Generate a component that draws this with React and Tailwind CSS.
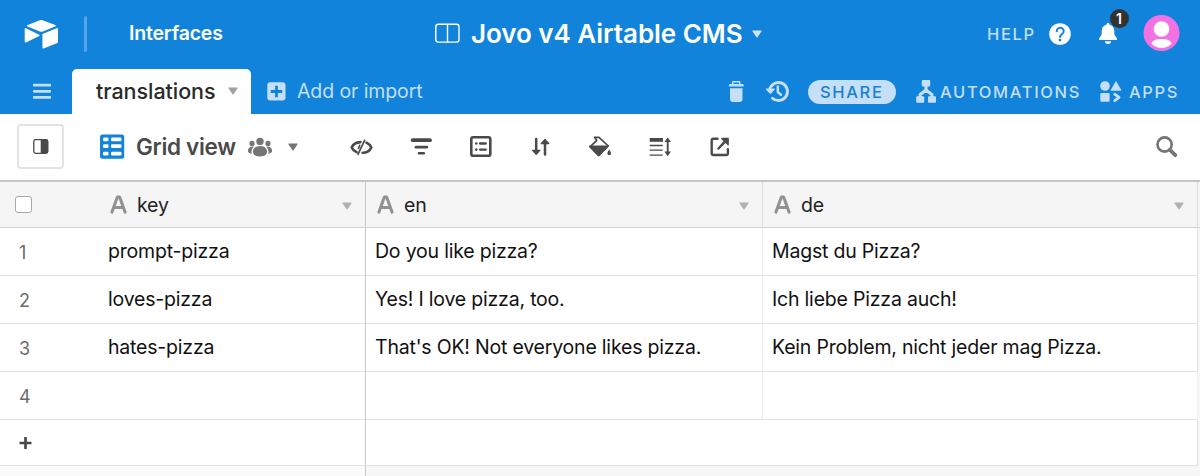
import React from "react";

// Every glyph is drawn in one shared coordinate space; x, y, w, h pick the part shown.
function Icon({ x, y, w, h, className = "", children }) {
  return (
    <svg
      width={w}
      height={h}
      viewBox={`${x} ${y} ${w} ${h}`}
      className={`block shrink-0 overflow-visible ${className}`}
      fill="currentColor"
      aria-hidden="true"
    >
      {children}
    </svg>
  );
}

function Caret({ className = "" }) {
  return (
    <Icon x={0} y={0} w={10} h={8} className={className}>
      <path d="M1 .5h8a.5.5 0 0 1 .4.9L5.5 7.2a.6.6 0 0 1-1 0L.6 1.4A.5.5 0 0 1 1 .5z" />
    </Icon>
  );
}

function TopBar() {
  return (
    <div className="flex h-[67px] items-center text-white">
      <Icon x={24} y={18} w={35} h={30} className="ml-6">
        <path d="M40 19.2 27.6 24.1c-.8.3-.8 1.2 0 1.5l12.2 4.8c1 .4 2 .4 3 0L55.200 25.6c.8-.3.8-1.200 0-1.500L42.600 19.200c-.9-.35-1.700-.35-2.600 0z" />
        <path d="M42.400 33.600v13c0 .7.7 1.200 1.300.9l13.700-5.500c.4-.15.6-.5.6-.9v-13c0-.7-.7-1.200-1.300-.9L43 32.700c-.4.15-.6.5-.6.9z" />
        <path d="M39.200 33.700 26 27.200c-.6-.3-1.300.1-1.300.8v12.600c0 .7.700 1.100 1.300.8l13.200-6.300c.6-.3.600-1.100 0-1.400z" />
      </Icon>
      <div className="ml-[25px] h-9 w-[3px] rounded-full bg-[#55a4e7]" />
      <div className="ml-[42px] w-[306px] whitespace-nowrap pt-px text-[19.5px] font-semibold tracking-[-0.2px]">Interfaces</div>
      <Icon x={435} y={23} w={25} h={20} className="">
        <g fill="none" stroke="currentColor" strokeWidth="1.4">
          <rect x="435.800" y="23.300" width="23.200" height="17.800" rx="2.500" />
          <path d="M447.500 23.500v18.500" />
        </g>
      </Icon>
      <div className="ml-[11px] w-[281px] whitespace-nowrap text-[26px] font-semibold tracking-[-0.05px]">Jovo v4 Airtable CMS</div>
      <Caret className="text-[#cfe5f9]" />
      <div className="ml-[225px] w-[62px] whitespace-nowrap pt-px text-[16.5px] font-medium tracking-[1.65px] text-[#c4dff7]">HELP</div>
      <Icon x={1049} y={22} w={22} h={22} className="">
        <circle cx="1060" cy="33" r="10.800" />
        <path d="M1056.700 30.200a3.500 3.400 0 1 1 5.300 2.900c-1.400.9-2 1.400-2 2.800" fill="none" stroke="#1283da" strokeWidth="2" strokeLinecap="round" />
        <circle cx="1060" cy="39.100" r="1.400" fill="#1283da" />
      </Icon>
      <div className="relative ml-7">
        <Icon x={1099} y={22} w={18} h={23} className="">
          <path d="M1108 23c.9 0 1.400.6 1.400 1.500 3 .8 4.900 3.200 4.900 6.300v3.200c0 1.700 2.700 3.300 2.700 5 0 .7-.5 1.100-1.200 1.100h-15.600c-.7 0-1.200-.4-1.200-1.100 0-1.700 2.700-3.300 2.700-5v-3.200c0-3.100 1.900-5.500 4.900-6.300 0-.9.5-1.500 1.400-1.500z" />
          <path d="M1105 41.200h6a3 2.700 0 0 1-6 0z" />
        </Icon>
        <div className="absolute -top-[13px] left-[10.500px] flex size-[19px] items-center justify-center rounded-full bg-[#333] text-[14px] font-semibold text-white">1</div>
      </div>
      <Icon x={1143} y={15} w={37} h={37} className="ml-[26px]">
        <circle cx="1161.500" cy="33" r="18" fill="#f272e3" />
        <circle cx="1161.500" cy="29" r="7.800" />
        <path d="M1151.400 43.400c1-3 4.600-4.400 10.100-4.400s9.100 1.400 10.100 4.400c-2.600 2.800-6 4.500-10.100 4.500s-7.500-1.700-10.100-4.500z" />
      </Icon>
    </div>
  );
}

function TabBar() {
  return (
    <div className="mt-[2px] flex h-[45px] items-center text-[#c4dff7]">
      <Icon x={33} y={83} w={18} h={17} className="ml-[33px]">
        <path d="M34.200 85.200h15.600M34.200 91.300h15.600M34.200 97.400h15.600" stroke="currentColor" strokeWidth="2.800" strokeLinecap="round" />
      </Icon>
      <div className="ml-[21px] flex h-[45px] w-[179px] items-center rounded-t-[5px] bg-white pl-6">
        <span className="w-[132px] whitespace-nowrap text-[21.5px] font-medium tracking-[-0.05px] text-[#2a2a2a]">translations</span>
        <Caret className="-mt-[2px] text-[#a0a0a0]" />
      </div>
      <Icon x={267} y={82} w={19} h={19} className="ml-4">
        <rect x="267.300" y="82.300" width="18.200" height="18.200" rx="3" />
        <path d="M276.500 85.700v11.600M270.700 91.500h11.600" stroke="#1283da" strokeWidth="2.800" />
      </Icon>
      <div className="ml-[11px] w-[432px] whitespace-nowrap pt-px text-[19.5px] tracking-[-0.1px]">Add or import</div>
      <Icon x={729} y={81} w={15} h={21} className="">
        <rect x="728.800" y="84" width="14.900" height="2.600" rx="1.200" />
        <path d="M732.700 84.500v-2.200c0-.3.200-.5.500-.5h6c.3 0 .5.200.5.500v2.200" fill="none" stroke="currentColor" strokeWidth="1.500" />
        <path d="M730 88.200h12.500v11.300a2.400 2.400 0 0 1-2.400 2.400h-7.700a2.400 2.400 0 0 1-2.400-2.400z" />
      </Icon>
      <Icon x={766} y={80} w={23} h={23} className="ml-[22px]">
        <path d="M769.500 90.500a9 9 0 1 1 2.900 7.700" fill="none" stroke="currentColor" strokeWidth="2.900" strokeLinecap="round" />
        <path d="M766.500 88.600h7.600c.6 0 .9.700.5 1.100l-3.500 3.900c-.4.400-1 .400-1.300 0l-3.800-3.900c-.4-.4-.1-1.100.5-1.100z" />
        <path d="M777.800 86.500v5.500l3.200 2.700" fill="none" stroke="currentColor" strokeWidth="2.500" strokeLinecap="round" strokeLinejoin="round" />
      </Icon>
      <div className="ml-[19px] flex h-6 w-[88px] items-center whitespace-nowrap rounded-full bg-[#c4dff7] pl-3 pt-px text-[16.5px] font-medium tracking-[1.65px] text-[#1a7fd0]">SHARE</div>
      <Icon x={916} y={80} w={21} h={23} className="ml-5">
        <rect x="921.800" y="80" width="8.400" height="6.500" rx="1" />
        <rect x="916.200" y="96.300" width="8" height="6.500" rx="1" />
        <rect x="928" y="96.300" width="8" height="6.500" rx="1" />
        <path d="M926 86v3.500M920.200 97v-2.500l5.800-4.500 5.800 4.500v2.500" fill="none" stroke="currentColor" strokeWidth="3.200" strokeLinejoin="round" />
      </Icon>
      <div className="ml-[3px] w-[160px] whitespace-nowrap pt-px text-[16.5px] font-medium tracking-[1.65px]">AUTOMATIONS</div>
      <Icon x={1100} y={81} w={22} h={21} className="">
        <circle cx="1105" cy="86" r="4.800" />
        <path d="M1116 81.600 1121 90.300H1111z" stroke="currentColor" strokeWidth=".8" strokeLinejoin="round" />
        <rect x="1100.300" y="93" width="9.300" height="8.700" rx="1" />
        <path d="M1114.700 94.200l4.400 3.200-4.400 3.300" fill="none" stroke="currentColor" strokeWidth="2.800" strokeLinecap="round" strokeLinejoin="round" />
      </Icon>
      <div className="ml-[7px] whitespace-nowrap pt-px text-[16.5px] font-medium tracking-[1.65px]">APPS</div>
    </div>
  );
}

function Toolbar() {
  return (
    <div className="flex h-[66px] items-center bg-white pb-px text-[#4a4a4a]">
      <div className="ml-[17px] flex h-[45px] w-[47px] items-center justify-center rounded-[4px] border-2 border-[#e3e3e3]">
        <Icon x={33} y={139} w={16} h={15} className="">
          <rect x="33.800" y="139.700" width="13.900" height="13.700" rx="1.800" fill="none" stroke="currentColor" strokeWidth="1.300" />
          <path d="M40.700 139.500h5.500a2 2 0 0 1 2 2v10a2 2 0 0 1-2 2h-5.500z" />
        </Icon>
      </div>
      <Icon x={100} y={134} w={24} h={25} className="ml-9 text-[#1283da]">
        <rect x="100" y="134.500" width="24.200" height="24.300" rx="2.500" />
        <g fill="#fff">
          <rect x="103" y="137.500" width="5.500" height="3.700" rx="1.200" />
          <rect x="111" y="137.500" width="10.500" height="3.700" rx="1.200" />
          <rect x="103" y="144.300" width="5.500" height="3.700" rx="1.200" />
          <rect x="111" y="144.300" width="10.500" height="3.700" rx="1.200" />
          <rect x="103" y="151.700" width="5.500" height="3.700" rx="1.200" />
          <rect x="111" y="151.700" width="10.500" height="3.700" rx="1.200" />
        </g>
      </Icon>
      <div className="ml-3 w-[112px] whitespace-nowrap pt-px text-[22.5px] font-semibold tracking-[-0.3px]">Grid view</div>
      <Icon x={248} y={137} w={24} h={20} className="text-[#757575]">
        <circle cx="260" cy="141.400" r="3.700" />
        <circle cx="252" cy="143.400" r="2.600" />
        <circle cx="268" cy="143.400" r="2.600" />
        <path d="M253 151.800c0-3.700 3-5.800 7-5.800s7 2.100 7 5.800c0 3-2.700 4.600-7 4.600s-7-1.600-7-4.600z" />
        <path d="M253.800 146.700c-3.600-.6-5.900 1.400-5.900 4.300 0 1.600 1.500 2.500 3.700 2.700-.5-2.800.3-5.300 2.200-7zM266.200 146.700c3.600-.6 5.900 1.400 5.900 4.300 0 1.600-1.500 2.500-3.700 2.700.5-2.800-.3-5.300-2.200-7z" />
      </Icon>
      <Caret className="ml-4 text-[#757575]" />
      <Icon x={350} y={137} w={23} h={18} className="ml-[52px]">
        <g fill="none" stroke="currentColor" strokeLinecap="round" strokeLinejoin="round">
          <path d="M356.600 151.200c-2.300-1.100-4.100-2.900-4.900-4.800 1.300-3 4.700-5.100 8.700-5.300M366.500 141.700c2.300 1.100 4 2.800 4.800 4.700-1.300 3-5 5.200-8.700 5.400" strokeWidth="2.600" />
          <path d="M364.600 139.300l-6.600 14" strokeWidth="1.700" />
          <path d="M359.700 144.300l-1.200 3.200" strokeWidth="1.600" />
        </g>
      </Icon>
      <Icon x={411} y={139} w={21} h={17} className="ml-[38px]">
        <g stroke="currentColor" strokeLinecap="round">
          <path d="M412.700 141.200h17.300" strokeWidth="3.800" />
          <path d="M416 148.200h10.800" strokeWidth="2.700" />
          <path d="M419 154.200h4.800" strokeWidth="2.500" />
        </g>
      </Icon>
      <Icon x={470} y={136} w={22} h={21} className="ml-[38px]">
        <rect x="471.300" y="137.200" width="19" height="18.500" rx="1.800" fill="none" stroke="currentColor" strokeWidth="2.600" />
        <circle cx="476.300" cy="143.500" r="1.300" />
        <circle cx="476.300" cy="149.600" r="1.300" />
        <path d="M480 143.500h5.800M480 149.600h5.800" stroke="currentColor" strokeWidth="2.300" strokeLinecap="round" />
      </Icon>
      <Icon x={531} y={137} w={20} h={20} className="ml-[39px]">
        <path d="M536.200 139v12M545 154.500v-12" stroke="currentColor" strokeWidth="2.500" strokeLinecap="round" />
        <path d="M532.300 149.700h7.800c.5 0 .7.500.4.900l-3.800 4.100c-.3.300-.7.300-1 0l-3.800-4.100c-.3-.4-.1-.9.400-.9zM541.100 144.200h7.800c.5 0 .7-.5.4-.9l-3.800-4.200c-.3-.3-.7-.3-1 0l-3.800 4.200c-.3.400-.1.900.4.900z" />
      </Icon>
      <Icon x={589} y={136} w={23} h={21} className="ml-[38px]">
        <path d="M594.500 137.300h4.500l9.300 8.700-9.300 9-8.700-8.300 6.500-6.300z" fill="none" stroke="currentColor" strokeWidth="1.700" strokeLinejoin="round" strokeLinecap="round" />
        <path d="M589.500 145.500h19.500l-9.300 10.400c-.6.600-1.300.6-1.900 0l-8.300-8.400c-.6-.6-.6-1.400 0-2z" />
        <path d="M609.200 149.500c1.200 1.800 1.800 3 1.800 4a1.800 1.800 0 0 1-3.600 0c0-1 .6-2.200 1.800-4z" />
      </Icon>
      <Icon x={649} y={137} w={23} h={20} className="ml-[37px]">
        <path d="M649.700 138h13.300v3.800h-13.300z" />
        <path d="M649.700 145.500h13M649.700 150.200h13M649.700 155.200h13" stroke="currentColor" strokeWidth="1.300" />
        <path d="M667.700 140v13.500" stroke="currentColor" strokeWidth="1.900" />
        <path d="M667.700 137.400l3.300 4.600h-6.600zM667.700 156.200l3.300-4.600h-6.600z" />
      </Icon>
      <Icon x={710} y={137} w={20} h={20} className="ml-[38px]">
        <g fill="none" stroke="currentColor" strokeWidth="2.400" strokeLinecap="round">
          <path d="M717.500 138.800h-4a1.800 1.800 0 0 0-1.800 1.800v12.600c0 1 .8 1.800 1.800 1.800h12.600c1 0 1.800-.8 1.800-1.800v-4" />
          <path d="M718.500 148.500l6-6.300" strokeWidth="2.500" />
        </g>
        <path d="M721.800 137.700h6.300c.5 0 .8.300.8.800v6.300c0 .6-.7.900-1.200.5l-6.400-6.300c-.5-.5-.1-1.300.5-1.300z" />
      </Icon>
      <Icon x={1156} y={136} w={22} h={22} className="ml-[426px] text-[#757575]">
        <circle cx="1164.600" cy="144.500" r="7.100" fill="none" stroke="currentColor" strokeWidth="2.600" />
        <path d="M1170 150l5.300 5.200" stroke="currentColor" strokeWidth="3.800" strokeLinecap="round" />
      </Icon>
    </div>
  );
}

function FieldName({ children, className = "" }) {
  return (
    <>
      <Icon x={0} y={0} w={17} h={19} className="text-[#919191]">
        <path d="M1.900 17.200 7 2.900c.6-1.500 2.400-1.500 3 0l5.100 14.300M4.200 12.500h8.600" fill="none" stroke="currentColor" strokeWidth="3" strokeLinecap="round" strokeLinejoin="round" />
      </Icon>
      <span className="ml-[10px] flex-1 whitespace-nowrap pt-[2px] text-[19.500px] tracking-[-0.15px] text-[#222]">{children}</span>
      <Caret className={`mt-[3px] text-[#b0b0b0] ${className}`} />
    </>
  );
}

const rows = [
  ["prompt-pizza", "Do you like pizza?", "Magst du Pizza?"],
  ["loves-pizza", "Yes! I love pizza, too.", "Ich liebe Pizza auch!"],
  ["hates-pizza", "That's OK! Not everyone likes pizza.", "Kein Problem, nicht jeder mag Pizza."],
  ["", "", ""],
];

function Grid() {
  return (
    <div className="flex flex-1 flex-col border-t-2 border-[#c6c6c6] bg-[#f7f7f7]">
      <div className="flex h-[46px] border-b border-[#d3d3d3] bg-[#f5f5f5]">
        <div className="flex w-[366px] items-center border-r border-[#c8c8c8]">
          <div className="ml-[15px] mr-[78px] size-[17px] shrink-0 rounded-[3px] border-[1.500px] border-[#a3a9af] bg-white" />
          <FieldName className="mr-[13px]">key</FieldName>
        </div>
        <div className="flex w-[397px] items-center border-r border-[#dadde0] pl-[11px]">
          <FieldName className="mr-[13px]">en</FieldName>
        </div>
        <div className="flex w-[435px] items-center border-r border-[#dadde0] pl-[11px]">
          <FieldName className="mr-[13px]">de</FieldName>
        </div>
      </div>
      {rows.map(([key, en, de], i) => (
        <div key={i} className="flex h-12 text-[19.500px] tracking-[-0.2px] text-[#111]">
          <div className="flex w-[366px] items-center whitespace-nowrap border-b border-r border-b-[#e0e0e0] border-r-[#c8c8c8] bg-white pl-[19px] pt-px">
            <span className="w-[89px] text-[18px] text-[#6b6b6b]">{i + 1}</span>
            {key}
          </div>
          <div className="flex w-[397px] items-center whitespace-nowrap border-b border-r border-b-[#dfe2e4] border-r-[#eceeef] bg-white pl-[9px] pt-px">{en}</div>
          <div className={`flex w-[435px] items-center whitespace-nowrap border-b border-r border-b-[#dfe2e4] bg-white pl-[9px] pt-px ${key ? "border-r-[#dfe2e4]" : "border-r-[#f2f2f2]"}`}>{de}</div>
        </div>
      ))}
      <div className="flex h-[46px] w-[1198px] shrink-0 border-b border-r border-[#dfe2e4] bg-white">
        <div className="flex w-[366px] items-center border-r border-[#c8c8c8]">
          <Icon x={0} y={0} w={13} h={12} className="ml-[19px] text-[#4a4a4a]">
            <path d="M6.500 0v12M.5 6h12" stroke="currentColor" strokeWidth="2.700" />
          </Icon>
        </div>
      </div>
      <div className="w-[366px] flex-1 border-r border-[#c8c8c8] bg-[#fbfbfb]" />
    </div>
  );
}

export default function App() {
  return (
    <div className="flex h-[476px] w-[1200px] flex-col overflow-hidden bg-white font-['Inter','Liberation_Sans',sans-serif]">
      <header className="bg-[#1283da]">
        <TopBar />
        <TabBar />
      </header>
      <Toolbar />
      <Grid />
    </div>
  );
}
